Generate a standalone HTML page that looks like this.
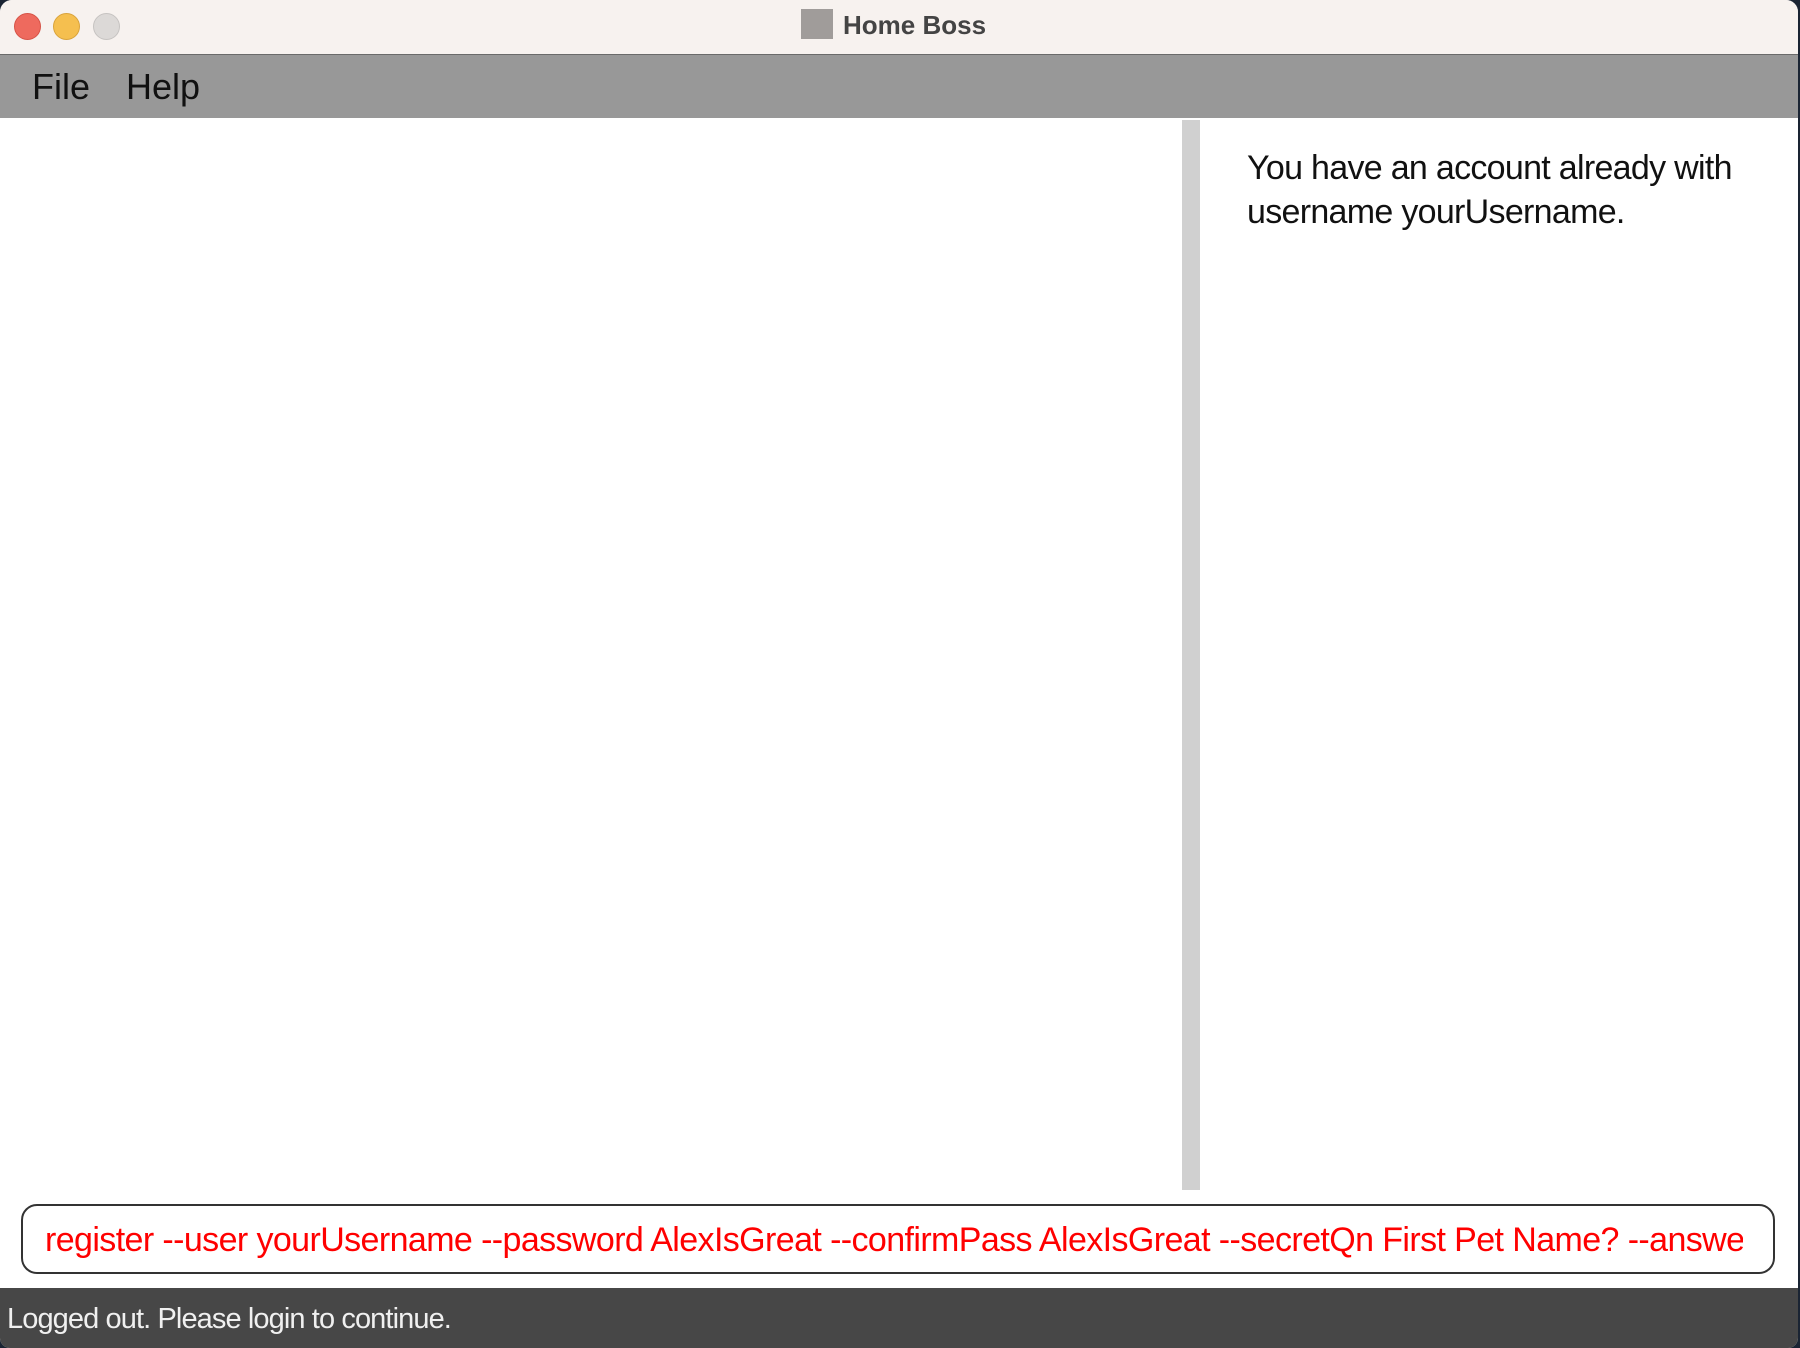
<!DOCTYPE html>
<html><head><meta charset="utf-8"><style>
html,body{margin:0;padding:0;width:1800px;height:1348px;overflow:hidden;background:#1a2433;font-family:"Liberation Sans",sans-serif}
#win{position:absolute;left:0;top:0;width:1798px;height:1348px;background:#fff;border-radius:12px 12px 10px 10px;overflow:hidden}
#title{position:absolute;left:0;top:0;width:100%;height:54px;background:#f7f2ef;border-bottom:1px solid #6a6a6a}
.dot{position:absolute;top:13px;width:25px;height:25px;border-radius:50%}
#menu{position:absolute;left:0;top:55px;width:100%;height:63px;background:#989898}
#menu span{position:absolute;top:11px;font-size:36px;color:#111}
#split{position:absolute;left:1182px;top:120px;width:18px;height:1070px;background:#d0d0d0}
#msg{position:absolute;left:1247px;top:146px;font-size:34px;line-height:44px;color:#111;letter-spacing:-0.7px}
#cmd{position:absolute;left:21px;top:1204px;width:1750px;height:66px;border:2px solid #333;border-radius:16px;overflow:hidden;background:#fff}
#cmd div{position:absolute;left:22px;top:15px;white-space:nowrap;font-size:34px;color:#f00;letter-spacing:-0.6px;width:1698px;overflow:hidden}
#status{position:absolute;left:0;top:1288px;width:100%;height:60px;background:#474747;color:#f0f0f0;font-size:29px}
#status span{position:absolute;left:7px;top:15px;letter-spacing:-0.9px}
</style></head><body>
<div id="win">
<div id="title">
<div class="dot" style="left:14px;background:#ee6a5e;border:1px solid #d65347"></div>
<div class="dot" style="left:53px;background:#f5bf4f;border:1px solid #d9a33b"></div>
<div class="dot" style="left:93px;background:#dcd9d7;border:1px solid #c6c3c1"></div>
<div style="position:absolute;left:801px;top:9px;width:32px;height:30px;background:#a09c9a"></div>
<div style="position:absolute;left:843px;top:10px;font-size:26px;font-weight:bold;color:#444">Home Boss</div>
</div>
<div id="menu"><span style="left:32px">File</span><span style="left:126px">Help</span></div>
<div id="split"></div>
<div id="msg">You have an account already with<br>username yourUsername.</div>
<div id="cmd"><div>register --user yourUsername --password AlexIsGreat --confirmPass AlexIsGreat --secretQn First Pet Name? --answer</div></div>
<div id="status"><span>Logged out. Please login to continue.</span></div>
</div>
</body></html>
